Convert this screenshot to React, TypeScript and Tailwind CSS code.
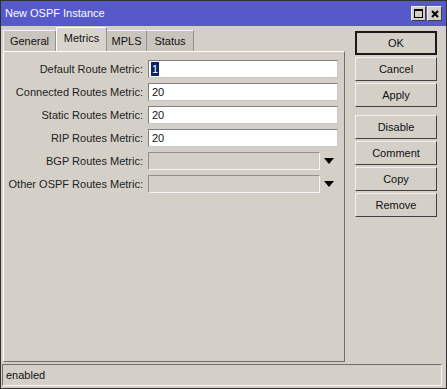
import React from "react";

const font = { fontFamily: '"Liberation Sans", Arial, sans-serif' };

function Field({ label, value, selected }: { label: string; value: string; selected?: boolean }) {
  return (
    <div className="flex items-center h-[17px]">
      <div className="w-[144px] text-right pr-[5px] text-[11px] text-[#1e1e1e] whitespace-nowrap">{label}</div>
      <div className="w-[190px] h-[18px] bg-white border border-[#808080] border-r-[#c8c8c8] border-b-[#c8c8c8] flex items-center pl-[2px] text-[11px] text-[#111]">
        {selected ? <span className="bg-[#0a246a] text-white px-[1px] leading-[14px]">{value}</span> : <span className="pl-[1px]">{value}</span>}
      </div>
    </div>
  );
}

function DisabledField({ label }: { label: string }) {
  return (
    <div className="flex items-center h-[17px]">
      <div className="w-[144px] text-right pr-[5px] text-[11px] text-[#1e1e1e] whitespace-nowrap">{label}</div>
      <div className="w-[172px] h-[18px] bg-[#d4d0c8] border border-[#909090] border-r-[#f4f4f4] border-b-[#f4f4f4]" />
      <svg width="12" height="8" viewBox="0 0 12 8" className="ml-[3px]">
        <polygon points="1,1 11,1 6,7" fill="#000" />
      </svg>
    </div>
  );
}

function Btn({ children, def }: { children: React.ReactNode; def?: boolean }) {
  return (
    <div
      className={
        "w-[82px] h-[24px] flex items-center justify-center text-[11px] text-[#111] bg-[#d4d0c8] " +
        (def
          ? "border-2 border-t-[#1a1a1a] border-l-[#1a1a1a] border-r-[#1a1a1a] border-b-[#1a1a1a]"
          : "border border-t-[#f0f0f0] border-l-[#f0f0f0] border-r-[#404040] border-b-[#404040]")
      }
    >
      {children}
    </div>
  );
}

export default function App() {
  return (
    <div style={font} className="w-[447px] h-[389px] bg-[#d4d0c8] border border-[#303030] flex flex-col relative overflow-hidden">
      {/* Title bar */}
      <div className="h-[26px] bg-[#5559c9] flex items-center justify-between pl-[4px] pr-[4px]">
        <span className="text-white text-[11px]">New OSPF Instance</span>
        <div className="flex gap-[1px]">
          <div className="w-[15px] h-[15px] bg-[#d4d0c8] border border-[#f0f0f0] border-r-[#404040] border-b-[#404040] flex items-center justify-center">
            <div className="w-[9px] h-[9px] border border-black border-t-2" />
          </div>
          <div className="w-[15px] h-[15px] bg-[#d4d0c8] border border-[#f0f0f0] border-r-[#404040] border-b-[#404040] flex items-center justify-center">
            <svg width="8" height="8" viewBox="0 0 8 8">
              <path d="M1 1 L7 7 M7 1 L1 7" stroke="#000" strokeWidth="2" />
            </svg>
          </div>
        </div>
      </div>

      <div className="flex flex-1">
        {/* Left */}
        <div className="flex flex-col ml-[2px] w-[342px]">
          <div className="flex items-end h-[25px] text-[11px] text-[#111]">
            <div className="w-[53px] h-[21px] flex items-center justify-center bg-[#c9c5bd] border border-b-0 border-t-[#f4f4f4] border-l-[#f4f4f4] border-r-[#909090]">General</div>
            <div className="w-[51px] h-[24px] flex items-center justify-center bg-[#d8d4cc] border border-b-0 border-t-[#ffffff] border-l-[#ffffff] border-r-[#909090] pb-[3px]">Metrics</div>
            <div className="w-[40px] h-[21px] flex items-center justify-center bg-[#c9c5bd] border border-b-0 border-t-[#f4f4f4] border-l-0 border-r-[#909090]">MPLS</div>
            <div className="w-[47px] h-[21px] flex items-center justify-center bg-[#c9c5bd] border border-b-0 border-t-[#f4f4f4] border-l-0 border-r-[#909090]">Status</div>
          </div>
          <div className="h-[311px] border border-t-[#ffffff] border-l-[#ffffff] border-r-[#707070] border-b-[#707070] pt-[8px] flex flex-col gap-[6px]">
            <Field label="Default Route Metric:" value="1" selected />
            <Field label="Connected Routes Metric:" value="20" />
            <Field label="Static Routes Metric:" value="20" />
            <Field label="RIP Routes Metric:" value="20" />
            <DisabledField label="BGP Routes Metric:" />
            <DisabledField label="Other OSPF Routes Metric:" />
          </div>
        </div>

        {/* Right buttons */}
        <div className="flex flex-col ml-[10px] pt-[5px] gap-[2px]">
          <Btn def>OK</Btn>
          <Btn>Cancel</Btn>
          <Btn>Apply</Btn>
          <div className="h-[4px]" />
          <Btn>Disable</Btn>
          <Btn>Comment</Btn>
          <Btn>Copy</Btn>
          <Btn>Remove</Btn>
        </div>
      </div>

      {/* Status bar */}
      <div className="ml-[1px] mr-[4px] mb-[2px] mt-[2px] h-[22px] border border-t-[#707070] border-l-[#707070] border-r-[#f4f4f4] border-b-[#f4f4f4] flex items-center pl-[3px] text-[11px] text-[#111]">
        enabled
      </div>
    </div>
  );
}
